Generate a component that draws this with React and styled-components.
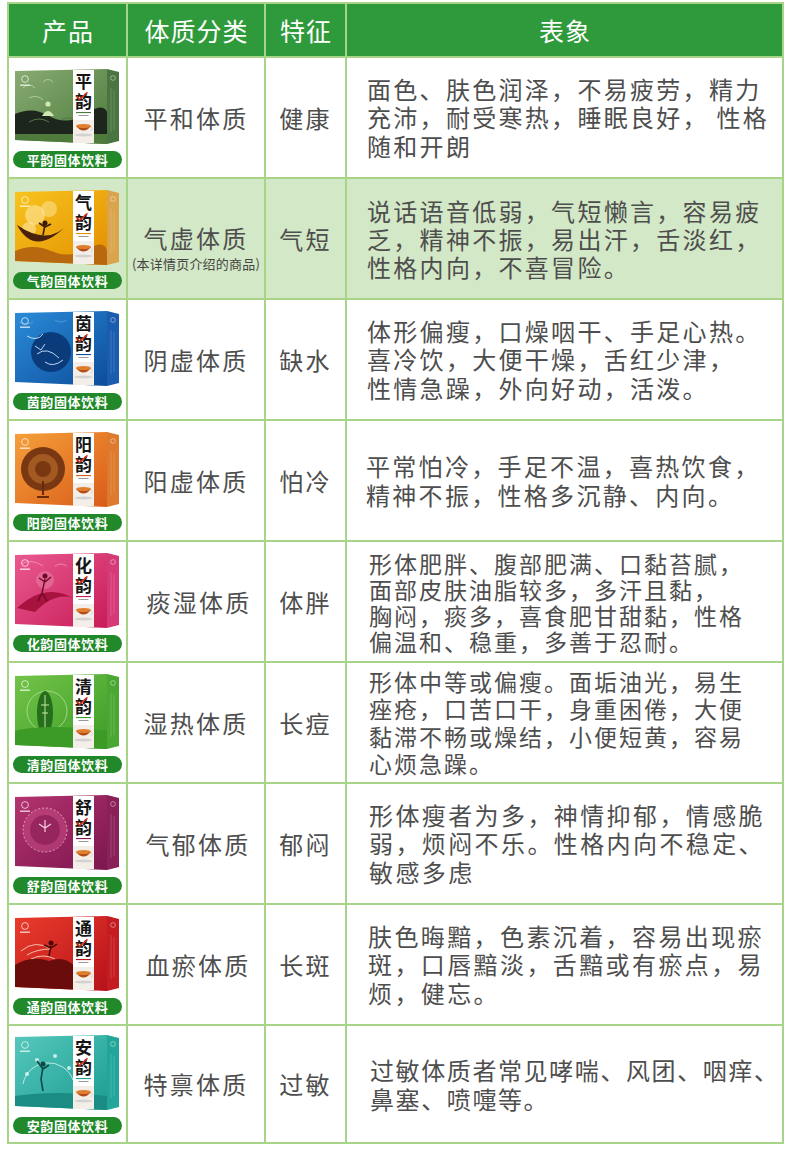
import React from "react";
import styled, { createGlobalStyle } from "styled-components";

const GlobalStyle = createGlobalStyle`
  html, body { margin: 0; padding: 0; background: #ffffff; }
  body { font-family: "Noto Sans CJK SC", "Noto Sans", sans-serif; }
`;

const Table = styled.div`
  display: grid;
  grid-template-columns: 117px 136px 79px 435px;
  grid-template-rows: 52px repeat(8, 119px) 116px;
  gap: 2px;
  padding: 2px;
  background: #a7d487;
  width: max-content;
  margin: 2px 0 0 7px;
`;

const HeadCell = styled.div`
  background: #2f9a3b;
  color: #ffffff;
  font-size: 25px;
  letter-spacing: 1px;
  display: flex;
  align-items: center;
  justify-content: center;
  padding-left: 1px;
`;

const Cell = styled.div`
  background: ${(p) => (p.$hl ? "#d3e8c6" : "#ffffff")};
  color: #4e4e4e;
  display: flex;
  align-items: center;
  justify-content: center;
  min-width: 0;
`;

const ProductCell = styled(Cell)`
  flex-direction: column;
  gap: 5px;
`;

const Pill = styled.div`
  width: 109px;
  height: 17px;
  border-radius: 9px;
  background: #21892a;
  color: #ffffff;
  font-size: 13px;
  font-weight: 700;
  letter-spacing: 0.6px;
  line-height: 17px;
  text-align: center;
`;

const TypeCell = styled(Cell)`
  flex-direction: column;
  padding-top: ${(p) => (p.$sub ? 18 : 0)}px;
  padding-left: ${(p) => p.$shift || 0}px;
  font-size: 24px;
  letter-spacing: 2.3px;
  line-height: 28px;
`;

const Sub = styled.div`
  font-size: 13px;
  letter-spacing: 0.2px;
  line-height: 16px;
  margin-top: 4px;
  color: #444;
`;

const DescCell = styled(Cell)`
  justify-content: flex-start;
  padding-left: ${(p) => p.$indent}px;
  font-size: ${(p) => p.$size}px;
  letter-spacing: ${(p) => p.$ls}px;
  line-height: ${(p) => p.$lh}px;
  white-space: nowrap;
`;

const Line = styled.span`
  display: block;
`;

const Deco = {
  ping: (
    <>
      <path d="M8 20 q6 -6 12 0 M28 14 q5 -5 10 0 M14 30 q8 -4 14 2" stroke="#d8ecc4" strokeWidth="0.8" fill="none" opacity="0.7" />
      <path d="M0 46 Q18 38 34 48 Q52 58 70 46 T92 44 L92 66 L0 66 Z" fill="#1d261d" />
      <circle cx="33" cy="36" r="2.6" fill="#cfe8b0" />
      <path d="M27 48 q6 -10 12 0 z" fill="#cfe8b0" />
      <path d="M14 54 q10 -6 20 0 M46 52 q8 -5 16 2" stroke="#55774a" strokeWidth="1" fill="none" />
      <rect x="0" y="66" width="92" height="12" fill="#4e7a3c" />
    </>
  ),
  qi: (
    <>
      <circle cx="20" cy="26" r="10" fill="#ffe7a0" opacity="0.6" />
      <circle cx="34" cy="20" r="8" fill="#ffe7a0" opacity="0.5" />
      <circle cx="14" cy="40" r="7" fill="#fff1c0" opacity="0.5" />
      <path d="M2 36 Q20 70 54 34 Q34 58 2 36 Z" fill="#4a220c" />
      <circle cx="30" cy="34" r="2.5" fill="#3a1a08" />
      <path d="M30 36 l-2 10 M30 38 l-6 -4 M30 38 l6 -3" stroke="#3a1a08" strokeWidth="1.6" />
      <path d="M0 62 Q18 54 36 62 T72 60 T92 62 L92 78 L0 78 Z" fill="#b8680e" />
    </>
  ),
  yin: (
    <>
      <circle cx="36" cy="42" r="20" fill="#0a3c7c" />
      <path d="M12 26 q10 6 16 -2 M22 44 q10 -8 22 4 M30 52 q8 6 18 -2 M20 36 l6 4 l4 -6" stroke="#cfe6ff" strokeWidth="0.9" fill="none" />
      <path d="M4 12 q8 4 14 0 M40 10 q6 4 12 0" stroke="#8ec4f0" strokeWidth="0.6" fill="none" opacity="0.7" />
    </>
  ),
  yang: (
    <>
      <circle cx="28" cy="38" r="22" fill="#7a3812" />
      <circle cx="28" cy="38" r="15" fill="#a35a22" />
      <circle cx="28" cy="38" r="8" fill="#7a3812" />
      <path d="M28 50 l0 14 M22 66 h12" stroke="#6a2a0a" strokeWidth="2" />
    </>
  ),
  hua: (
    <>
      <path d="M2 56 Q30 30 58 46 Q40 40 20 60 Z" fill="#a8123e" />
      <circle cx="30" cy="28" r="9" fill="#e77aa0" opacity="0.6" />
      <circle cx="30" cy="24" r="2.5" fill="#6a0a26" />
      <path d="M30 27 l-3 14 l-4 8 M27 41 l5 8 M30 30 l-6 -4 M30 30 l6 -5" stroke="#6a0a26" strokeWidth="1.4" fill="none" />
      <path d="M6 12 q10 -6 22 2 M40 14 q6 -4 12 0" stroke="#f4b0c8" strokeWidth="0.6" fill="none" />
    </>
  ),
  qing: (
    <>
      <circle cx="32" cy="38" r="20" fill="none" stroke="#c8eab0" strokeWidth="0.8" opacity="0.8" />
      <ellipse cx="30" cy="40" rx="8" ry="22" fill="#246e1c" />
      <path d="M30 22 v34 M26 32 h8 M27 40 h6" stroke="#c6e8a0" strokeWidth="1" />
      <path d="M0 58 Q30 50 92 58 L92 78 L0 78 Z" fill="#3c9a26" />
    </>
  ),
  shu: (
    <>
      <circle cx="30" cy="36" r="22" fill="#c44a84" opacity="0.55" />
      <circle cx="30" cy="36" r="22" fill="none" stroke="#f0b8d4" strokeWidth="0.8" strokeDasharray="2 2" />
      <circle cx="30" cy="36" r="15" fill="#8a1c56" opacity="0.7" />
      <path d="M30 26 l0 12 M24 30 l6 4 l6 -4" stroke="#f6d0e2" strokeWidth="1.2" fill="none" />
    </>
  ),
  tong: (
    <>
      <path d="M6 36 q14 -12 30 -2 q-14 0 -24 6 M16 44 q12 -6 24 0" stroke="#f6c0a8" strokeWidth="1" fill="none" />
      <path d="M0 50 Q16 40 34 46 Q50 40 60 52 L60 78 L0 78 Z" fill="#6a0c0c" />
      <circle cx="36" cy="28" r="2.5" fill="#4a0606" />
      <path d="M36 31 l-2 10 M36 33 l-7 -3 M36 33 l6 -4" stroke="#4a0606" strokeWidth="1.5" />
    </>
  ),
  an: (
    <>
      <path d="M8 50 A26 26 0 0 1 58 46" fill="none" stroke="#e6fbf8" strokeWidth="0.9" opacity="0.8" />
      <circle cx="12" cy="40" r="2" fill="#e6fbf8" opacity="0.8" />
      <circle cx="22" cy="26" r="2" fill="#e6fbf8" opacity="0.8" />
      <circle cx="40" cy="22" r="2" fill="#e6fbf8" opacity="0.8" />
      <circle cx="54" cy="34" r="2" fill="#e6fbf8" opacity="0.8" />
      <circle cx="28" cy="30" r="2.5" fill="#0b4a48" />
      <path d="M28 33 l-2 12 l2 12 M28 35 l-6 -8 M28 35 l6 -4" stroke="#0b4a48" strokeWidth="1.6" fill="none" />
      <path d="M0 62 Q40 56 92 62 L92 78 L0 78 Z" fill="#1a8c84" />
    </>
  ),
};

const products = [
  {
    key: "ping", ch: "平", c1: "#88ac72", c2: "#4d7a3c", side: "#4a7540",
    type: "平和体质", feature: "健康",
    lines: ["面色、肤色润泽，不易疲劳，精力", "充沛，耐受寒热，睡眠良好， 性格", "随和开朗"],
    indent: 20, size: 24, ls: 2.3, lh: 28.5,
  },
  {
    key: "qi", ch: "气", c1: "#f7c51e", c2: "#e48e00", side: "#d9a44c", hl: true,
    type: "气虚体质", sub: "(本详情页介绍的商品)", feature: "气短",
    lines: ["说话语音低弱，气短懒言，容易疲", "乏，精神不振，易出汗，舌淡红，", "性格内向，不喜冒险。"],
    indent: 20, size: 24, ls: 2.3, lh: 28,
  },
  {
    key: "yin", ch: "茵", c1: "#2b8cd8", c2: "#0d4d9c", side: "#1a5cae",
    type: "阴虚体质", feature: "缺水",
    lines: ["体形偏瘦，口燥咽干、手足心热。", "喜冷饮，大便干燥，舌红少津，", "性情急躁，外向好动，活泼。"],
    indent: 20, size: 24, ls: 2.3, lh: 28.5,
  },
  {
    key: "yang", ch: "阳", c1: "#f5a03a", c2: "#d95c1a", side: "#dd7a2c",
    type: "阳虚体质", feature: "怕冷",
    lines: ["平常怕冷，手足不温，喜热饮食，", "精神不振，性格多沉静、内向。"],
    indent: 19, size: 24, ls: 2.3, lh: 28.5,
  },
  {
    key: "hua", ch: "化", c1: "#ea5a90", c2: "#c81c58", side: "#d63a76",
    type: "痰湿体质", feature: "体胖", shift: 6,
    lines: ["形体肥胖、腹部肥满、口黏苔腻，", "面部皮肤油脂较多，多汗且黏，", "胸闷，痰多，喜食肥甘甜黏，性格", "偏温和、稳重，多善于忍耐。"],
    indent: 22, size: 23, ls: 2, lh: 26,
  },
  {
    key: "qing", ch: "清", c1: "#74c448", c2: "#3c9c28", side: "#4aa832",
    type: "湿热体质", feature: "长痘",
    lines: ["形体中等或偏瘦。面垢油光，易生", "痤疮，口苦口干，身重困倦，大便", "黏滞不畅或燥结，小便短黄，容易", "心烦急躁。"],
    indent: 22, size: 23, ls: 2, lh: 27.5,
  },
  {
    key: "shu", ch: "舒", c1: "#b4346e", c2: "#7c1650", side: "#8a2058",
    type: "气郁体质", feature: "郁闷", shift: 4,
    lines: ["形体瘦者为多，神情抑郁，情感脆", "弱，烦闷不乐。性格内向不稳定、", "敏感多虑"],
    indent: 22, size: 24, ls: 2.4, lh: 28.5,
  },
  {
    key: "tong", ch: "通", c1: "#ea3c2c", c2: "#b6121a", side: "#c41c20",
    type: "血瘀体质", feature: "长斑", shift: 4,
    lines: ["肤色晦黯，色素沉着，容易出现瘀", "斑，口唇黯淡，舌黯或有瘀点，易", "烦，健忘。"],
    indent: 21, size: 24, ls: 2.4, lh: 28.5,
  },
  {
    key: "an", ch: "安", c1: "#56c8bc", c2: "#1c9c92", side: "#22a69a",
    type: "特禀体质", feature: "过敏",
    lines: ["过敏体质者常见哮喘、风团、咽痒、", "鼻塞、喷嚏等。"],
    indent: 23, size: 24, ls: 1.6, lh: 29,
  },
];

function ProductBox({ p }) {
  const gid = `grad-${p.key}`;
  const cid = `clip-${p.key}`;
  return (
    <svg width="106" height="78" viewBox="0 0 106 78">
      <defs>
        <linearGradient id={gid} x1="0" y1="0" x2="1" y2="1">
          <stop offset="0" stopColor={p.c1} />
          <stop offset="1" stopColor={p.c2} />
        </linearGradient>
        <clipPath id={cid}>
          <polygon points="0,3 92,1 92,76 0,72" />
        </clipPath>
      </defs>
      <polygon points="92,1 104,4 104,73 92,76" fill={p.side} />
      <path d="M96 20 v44 M99 22 v40" stroke="#ffffff" strokeWidth="0.5" opacity="0.35" />
      <circle cx="98" cy="10" r="2.4" fill="none" stroke="#ffffff" strokeWidth="0.6" opacity="0.7" />
      <polygon points="0,3 92,1 92,76 0,72" fill={`url(#${gid})`} />
      <g clipPath={`url(#${cid})`}>{Deco[p.key]}</g>
      <circle cx="10" cy="11" r="3.4" fill="none" stroke="#ffffff" strokeWidth="0.8" opacity="0.85" />
      <rect x="5" y="16.5" width="10" height="1.4" fill="#ffffff" opacity="0.75" />
      <rect x="58" y="2" width="21" height="73" fill="#ffffff" />
      <rect x="58" y="52" width="21" height="23" fill="#f4eee8" />
      <text x="68.5" y="20" fontSize="17" fontWeight="700" textAnchor="middle" fill="#151515" fontFamily="Noto Sans CJK SC, sans-serif">{p.ch}</text>
      <text x="68.5" y="40" fontSize="17" fontWeight="700" textAnchor="middle" fill="#151515" fontFamily="Noto Sans CJK SC, sans-serif">韵</text>
      <path d="M61.5 28 l3 3.4 l8 -7" stroke="#d8321e" strokeWidth="1.4" fill="none" />
      <rect x="61" y="44" width="15" height="1.1" fill={p.c2} />
      <rect x="63.5" y="47" width="10" height="1" fill="#999999" />
      <path d="M61 58 q7.5 9 15 0 z" fill="#b24c16" />
      <ellipse cx="68.5" cy="58" rx="7.5" ry="2" fill="#de7e2e" />
      <path d="M76 59 q3 1 0 4" stroke="#cccccc" strokeWidth="0.8" fill="none" />
      <ellipse cx="68.5" cy="67" rx="9" ry="1.4" fill="#d2d2d2" />
    </svg>
  );
}

export default function App() {
  return (
    <>
      <GlobalStyle />
      <Table>
        <HeadCell>产品</HeadCell>
        <HeadCell>体质分类</HeadCell>
        <HeadCell>特征</HeadCell>
        <HeadCell>表象</HeadCell>
        {products.map((p) => (
          <React.Fragment key={p.key}>
            <ProductCell $hl={p.hl}>
              <ProductBox p={p} />
              <Pill>{p.ch}韵固体饮料</Pill>
            </ProductCell>
            <TypeCell $hl={p.hl} $sub={!!p.sub} $shift={p.shift}>
              <div>{p.type}</div>
              {p.sub && <Sub>{p.sub}</Sub>}
            </TypeCell>
            <TypeCell $hl={p.hl}>{p.feature}</TypeCell>
            <DescCell $hl={p.hl} $indent={p.indent} $size={p.size} $ls={p.ls} $lh={p.lh}>
              <div>
                {p.lines.map((l, i) => (
                  <Line key={i}>{l}</Line>
                ))}
              </div>
            </DescCell>
          </React.Fragment>
        ))}
      </Table>
    </>
  );
}
